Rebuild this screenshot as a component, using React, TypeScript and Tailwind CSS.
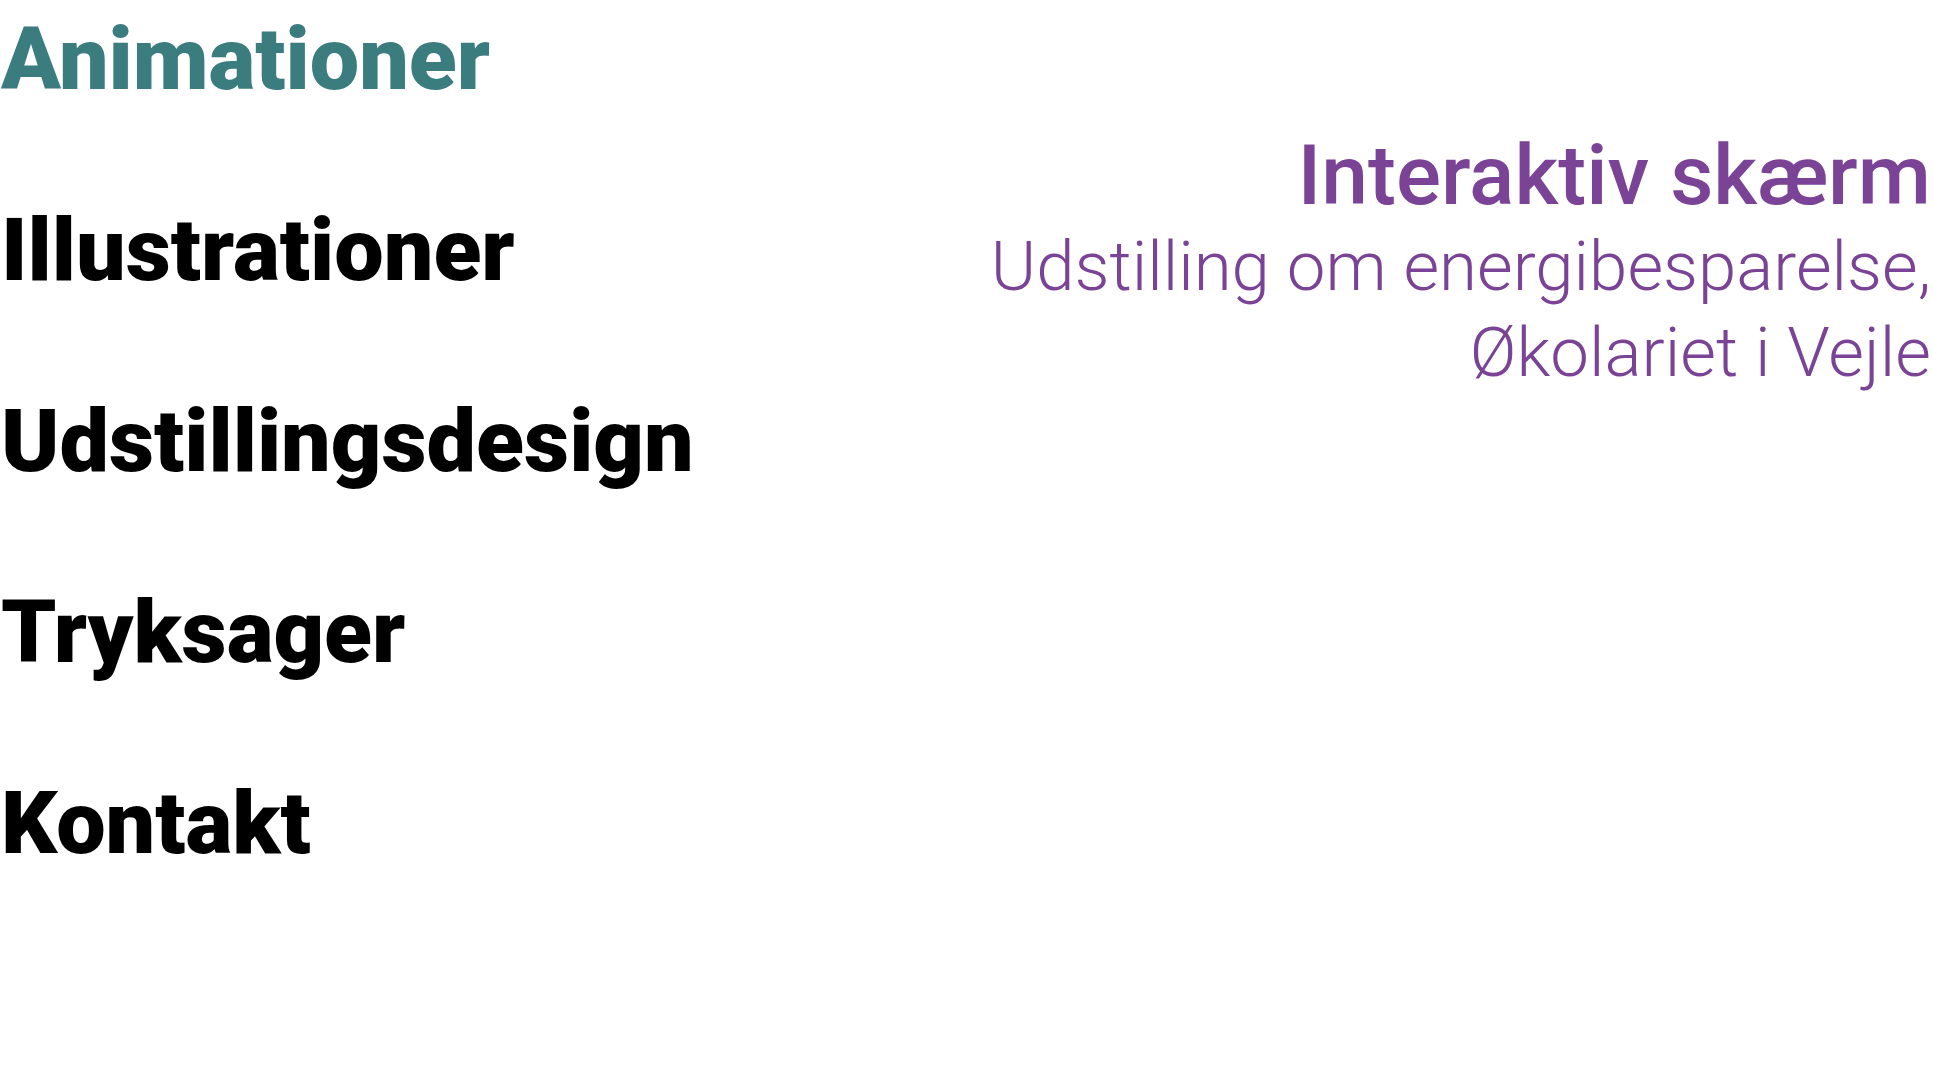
const menu = [
  { label: 'Animationer', active: true },
  { label: 'Illustrationer', active: false },
  { label: 'Udstillingsdesign', active: false },
  { label: 'Tryksager', active: false },
  { label: 'Kontakt', active: false },
];

export default function App() {
  return (
    <div className="flex justify-between min-h-screen bg-white font-['Roboto',sans-serif]">
      <nav className="pt-[15px] pl-px">
        <ul className="flex flex-col gap-[103px]">
          {menu.map((item) => (
            <li key={item.label}>
              <a
                href="#"
                className={`block text-[88px] leading-[88px] font-black ${item.active ? 'text-[#3b7c7f]' : 'text-black'}`}
              >
                {item.label}
              </a>
            </li>
          ))}
        </ul>
      </nav>

      <div className="pt-[134px] pr-[2px] text-right text-[#7a4396]">
        <h1 className="text-[84px] leading-[84px] font-medium">Interaktiv skærm</h1>
        <p className="mt-[6px] text-[69px] leading-[86px] font-light">
          Udstilling om energibesparelse,
          <br />
          Økolariet i Vejle
        </p>
      </div>
    </div>
  );
}
